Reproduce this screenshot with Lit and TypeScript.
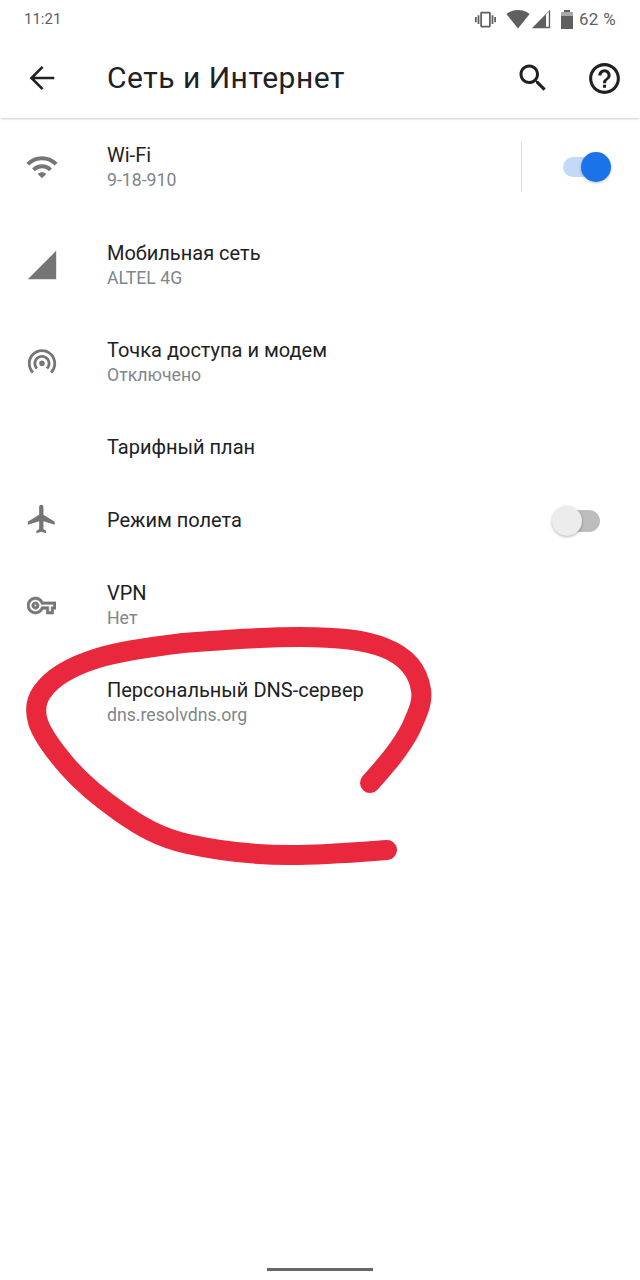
import { LitElement, html, css, svg } from "lit";
import { customElement } from "lit/decorators.js";

const P = {
  back: "M20.2 12H5M12.4 4.6 5 12l7.4 7.4",
  search: "M15.5 14h-.79l-.28-.27C15.41 12.59 16 11.11 16 9.5 16 5.91 13.09 3 9.5 3S3 5.91 3 9.5 5.91 16 9.5 16c1.61 0 3.09-.59 4.23-1.57l.27.28v.79l5 4.99L20.49 19l-4.99-5zm-6 0C7.01 14 5 11.99 5 9.5S7.01 5 9.5 5 14 7.01 14 9.5 11.99 14 9.5 14z",
  help: "M11 18h2v-2h-2v2zm1-16C6.48 2 2 6.48 2 12s4.48 10 10 10 10-4.48 10-10S17.52 2 12 2zm0 18c-4.41 0-8-3.59-8-8s3.59-8 8-8 8 3.59 8 8-3.59 8-8 8zm0-14c-2.21 0-4 1.79-4 4h2c0-1.1.9-2 2-2s2 .9 2 2c0 2-3 1.75-3 5h2c0-2.25 3-2.5 3-5 0-2.21-1.79-4-4-4z",
  wifi: "M1 9l2 2c4.97-4.97 13.03-4.97 18 0l2-2C16.93 2.93 7.08 2.93 1 9zm8 8l3 3 3-3c-1.65-1.66-4.34-1.66-6 0zm-4-4l2 2c2.76-2.76 7.24-2.76 10 0l2-2C15.14 9.14 8.87 9.14 5 13z",
  signal: "M2 22h20V2z",
  hotspot: "M12 11c-1.1 0-2 .9-2 2 0 .55.23 1.05.59 1.41.36.36.86.59 1.41.59s1.05-.23 1.41-.59c.36-.36.59-.86.59-1.41 0-1.1-.9-2-2-2zm6 2c0-3.31-2.69-6-6-6s-6 2.69-6 6c0 1.66.68 3.15 1.76 4.24l1.42-1.42C8.45 15.1 8 14.11 8 13c0-2.21 1.79-4 4-4s4 1.79 4 4c0 1.11-.45 2.1-1.18 2.82l1.42 1.42C17.32 16.15 18 14.66 18 13zm-6-10C6.48 3 2 7.48 2 13c0 2.76 1.12 5.26 2.93 7.07l1.42-1.42C4.9 17.21 4 15.21 4 13c0-4.42 3.58-8 8-8s8 3.58 8 8c0 2.21-.9 4.21-2.35 5.65l1.42 1.42C20.88 18.26 22 15.76 22 13c0-5.52-4.48-10-10-10z",
  plane: "M21 16v-2l-8-5V3.5c0-.83-.67-1.5-1.5-1.5S10 2.67 10 3.5V9l-8 5v2l8-2.5V19l-2 1.5V22l3.5-1 3.5 1v-1.5L13 19v-5.5l8 2.5z",
  key: "M22 19h-6v-4h-2.68c-1.14 2.42-3.6 4-6.32 4-3.86 0-7-3.14-7-7s3.14-7 7-7c2.72 0 5.17 1.58 6.32 4H24v6h-2v4zm-4-2h2v-4h2v-2H11.94l-.23-.67C11.01 8.34 9.11 7 7 7c-2.76 0-5 2.24-5 5s2.24 5 5 5c2.11 0 4.01-1.34 4.71-3.33l.23-.67H18v4zM7 15c-1.65 0-3-1.35-3-3s1.35-3 3-3 3 1.35 3 3-1.35 3-3 3zm0-4c-.55 0-1 .45-1 1s.45 1 1 1 1-.45 1-1-.45-1-1-1z",
  vibrate: "M0 15h2V9H0v6zm3 2h2V7H3v10zm19-8v6h2V9h-2zm-3 8h2V7h-2v10zM16.5 3h-9C6.67 3 6 3.67 6 4.5v15c0 .83.67 1.5 1.5 1.5h9c.83 0 1.5-.67 1.5-1.5v-15c0-.83-.67-1.5-1.5-1.5zM16 19H8V5h8v14z",
  wedge: "M12.01 21.49L23.64 7c-.45-.34-4.93-4-11.64-4C5.28 3 .81 6.66.36 7l11.63 14.49L12 21.5l.01-.01z",
  bars: "M2 22h20V2L2 22zM20.5 20.5h-3V7l3-3z",
};

const icon = (d: string, cls: string, rule = "nonzero") => html`<svg class=${cls} viewBox="0 0 24 24"><path d=${d} fill-rule=${rule}></path></svg>`;

type Row = { title: string; sub?: string; d?: string; cls?: string; toggle?: "on" | "off"; divider?: boolean; low?: boolean };

const ROWS: Row[] = [
  { title: "Wi-Fi", sub: "9-18-910", d: P.wifi, toggle: "on", divider: true, low: true },
  { title: "Мобильная сеть", sub: "ALTEL 4G", d: P.signal, low: true },
  { title: "Точка доступа и модем", sub: "Отключено", d: P.hotspot, low: true },
  { title: "Тарифный план" },
  { title: "Режим полета", d: P.plane, cls: "p", toggle: "off" },
  { title: "VPN", sub: "Нет", d: P.key, cls: "k" },
  { title: "Персональный DNS-сервер", sub: "dns.resolvdns.org" },
];

@customElement("app-root")
export class AppRoot extends LitElement {
  static styles = css`
    :host {
      display: flex;
      flex-direction: column;
      position: relative;
      width: 640px;
      height: 1280px;
      overflow: hidden;
      background: #fff;
      font-family: Roboto, "Noto Sans", sans-serif;
      color: #202124;
    }
    .status {
      height: 38px;
      display: flex;
      align-items: center;
      padding: 0 24px;
      color: #5f5f5f;
      font-size: 15px;
    }
    .status svg { fill: #5f5f5f; display: block; }
    .time { flex: 1; }
    .s-vib { width: 21px; height: 21px; }
    .s-wifi { width: 24px; height: 24px; margin-left: 10px; }
    .s-bars { width: 22px; height: 22px; margin-left: 0; }
    .battery {
      width: 12px;
      height: 19px;
      margin-left: 9px;
      display: flex;
      flex-direction: column;
      align-items: center;
    }
    .battery .cap { width: 6px; height: 2px; background: #5f5f5f; }
    .battery .body { width: 12px; flex: 1; background: linear-gradient(#a9a9a9 22%, #5f5f5f 22%); }
    .pct { font-size: 17px; margin-left: 6px; letter-spacing: 0.3px; }
    .bar {
      height: 80px;
      flex: none;
      display: flex;
      align-items: center;
      box-shadow: 0 2px 2px -1px rgba(0, 0, 0, 0.2);
      position: relative;
    }
    .bar svg { fill: #202124; display: block; }
    .bar svg.back { width: 36px; height: 36px; margin-left: 23.5px; fill: none; stroke: #202124; stroke-width: 1.75; }
    .bar h1 {
      margin: 0 0 0 47.5px;
      flex: 1;
      font-size: 30px;
      font-weight: 400;
      line-height: 36px;
      letter-spacing: 0.5px;
    }
    .bar .search { width: 36px; height: 36px; margin-right: 35px; }
    .bar .help { width: 37px; height: 37px; margin-right: 17px; }
    .list { flex: 1; padding-top: 0.5px; }
    .row {
      display: flex;
      align-items: center;
      height: 97.5px;
    }
    .row.single { height: 73px; }
    .slot {
      width: 83px;
      margin-right: 24px;
      flex: none;
      display: flex;
      justify-content: center;
    }
    .slot svg { width: 34px; height: 34px; fill: #757575; display: block; }
    .slot svg.k { width: 29px; height: 29px; stroke: #757575; stroke-width: 0.5; }
    .slot svg.p { margin-bottom: 3px; }
    .text { flex: 1; min-width: 0; }
    .text.low { padding-top: 2px; }
    .title { font-size: 20px; line-height: 25px; }
    .sub { font-size: 17.7px; line-height: 25px; color: #80868b; }
    .divider { width: 1px; height: 50px; background: #dcdcdc; margin-right: 39px; }
    .toggle { position: relative; width: 50px; height: 30px; margin-right: 29px; flex: none; }
    .track { position: absolute; }
    .thumb { position: absolute; top: 0; width: 30px; height: 30px; border-radius: 50%; }
    .on .track { left: 2px; width: 37px; height: 20px; top: 5px; border-radius: 10px; background: #c3d9f7; }
    .on .thumb { left: 20px; background: #1a73e8; box-shadow: 0 1px 3px rgba(0, 0, 0, 0.25); }
    .off .track { left: 4px; width: 35px; height: 22px; top: 4px; border-radius: 11px; background: #bdbdbd; }
    .off .thumb { left: -9px; background: #ececec; box-shadow: 0 1px 3px rgba(0, 0, 0, 0.3); }
    .nav { height: 3px; width: 106px; background: #666; align-self: center; margin-bottom: 9.5px; flex: none; }
    .scribble { position: absolute; left: 0; top: 0; width: 640px; height: 1280px; pointer-events: none; }
    .scribble path { fill: none; stroke: #e9283d; stroke-width: 20; stroke-linecap: round; stroke-linejoin: round; }
  `;

  private renderRow(r: Row) {
    return html`
      <div class="row ${r.sub ? "" : "single"}">
        <div class="slot">${r.d ? icon(r.d, r.cls ?? "") : ""}</div>
        <div class="text ${r.low ? "low" : ""}">
          <div class="title">${r.title}</div>
          ${r.sub ? html`<div class="sub">${r.sub}</div>` : ""}
        </div>
        ${r.divider ? html`<div class="divider"></div>` : ""}
        ${r.toggle ? html`<div class="toggle ${r.toggle}"><div class="track"></div><div class="thumb"></div></div>` : ""}
      </div>
    `;
  }

  render() {
    return html`
      <div class="status">
        <span class="time">11:21</span>
        ${icon(P.vibrate, "s-vib")}
        ${icon(P.wedge, "s-wifi")}
        ${icon(P.bars, "s-bars", "evenodd")}
        <div class="battery"><div class="cap"></div><div class="body"></div></div>
        <span class="pct">62 %</span>
      </div>
      <div class="bar">
        ${icon(P.back, "back")}
        <h1>Сеть и Интернет</h1>
        ${icon(P.search, "search")}
        ${icon(P.help, "help")}
      </div>
      <div class="list">${ROWS.map((r) => this.renderRow(r))}</div>
      <div class="nav"></div>
      <svg class="scribble" viewBox="0 0 640 1280">
        ${svg`<path d="M370 783C386 765 401 748 411 728C418 712 423 702 421 690C418 670 405 656 385 648C365 640 340 637 300 637C260 637 220 640 183 643C150 647 120 651 98 658C72 666 53 676 42 692C35 702 35 712 38 722C43 737 55 752 68 767C82 783 100 798 120 812C140 826 160 838 188 844C215 850 250 855 290 855C325 855 360 852 387 850"></path>`}
      </svg>
    `;
  }
}
